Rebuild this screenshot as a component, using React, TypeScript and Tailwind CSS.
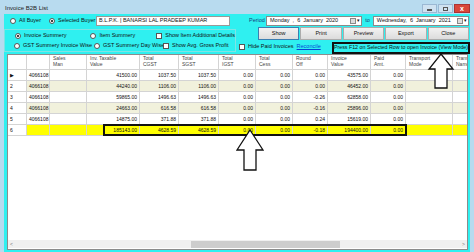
import React from "react";

type Row = {
  no: string;
  code: string;
  taxable: string;
  cgst: string;
  sgst: string;
  igst: string;
  cess: string;
  round: string;
  invoice: string;
  paid: string;
};

const rows: Row[] = [
  { no: "", code: "4066108", taxable: "41500.00", cgst: "1037.50", sgst: "1037.50", igst: "0.00", cess: "0.00", round: "0.00", invoice: "43575.00", paid: "0.00" },
  { no: "2", code: "4066108", taxable: "44240.00", cgst: "1106.00", sgst: "1106.00", igst: "0.00", cess: "0.00", round: "0.00", invoice: "46452.00", paid: "0.00" },
  { no: "3", code: "4066108", taxable: "59865.00", cgst: "1496.63", sgst: "1496.63", igst: "0.00", cess: "0.00", round: "-0.26", invoice: "62858.00", paid: "0.00" },
  { no: "4", code: "4066108", taxable: "24663.00", cgst: "616.58", sgst: "616.58", igst: "0.00", cess: "0.00", round: "-0.16", invoice: "25896.00", paid: "0.00" },
  { no: "5", code: "4066108", taxable: "14875.00", cgst: "371.88", sgst: "371.88", igst: "0.00", cess: "0.00", round: "0.24", invoice: "15619.00", paid: "0.00" },
];

const total: Row = { no: "6", code: "", taxable: "185143.00", cgst: "4628.59", sgst: "4628.59", igst: "0.00", cess: "0.00", round: "-0.18", invoice: "194400.00", paid: "0.00" };

const Radio = ({ checked, label }: { checked?: boolean; label: string }) => (
  <div className="flex items-center gap-[3px] whitespace-nowrap">
    <span className="w-[6px] h-[6px] shrink-0 rounded-full bg-white border border-[#555] flex items-center justify-center">
      {checked && <span className="w-[2px] h-[2px] rounded-full bg-black" />}
    </span>
    <span>{label}</span>
  </div>
);

const Check = ({ label }: { label: string }) => (
  <div className="flex items-center gap-[3px] whitespace-nowrap">
    <span className="w-[6px] h-[6px] shrink-0 bg-white border border-[#555]" />
    <span>{label}</span>
  </div>
);

const DateBox = ({ text }: { text: string }) => (
  <div className="h-[10px] bg-white border border-[#8a8a8a] flex items-center pl-[3px] pr-[1px] whitespace-pre flex-1 overflow-hidden">
    <span className="flex-1">{text}</span>
    <span className="flex items-center gap-[1px]">
      <span className="w-[6px] h-[6px] border border-[#888] bg-[#ddd]" />
      <span className="text-[5px] leading-none">▾</span>
    </span>
  </div>
);

const Btn = ({ label, focus }: { label: string; focus?: boolean }) => (
  <div
    className={`h-[13px] flex items-center justify-center bg-gradient-to-b from-[#f2f2f2] to-[#dcdcdc] border ${focus ? "border-[#3c7fb1]" : "border-[#acacac]"}`}
  >
    {label}
  </div>
);

const widths = [19, 23, 37, 53, 39, 40, 37, 37, 35, 43, 35, 47, 40];
const headers = ["", "", "Sales\nMan", "Inv. Taxable\nValue", "Total\nCGST", "Total\nSGST", "Total\nIGST", "Total\nCess", "Round\nOff", "Invoice\nValue", "Paid\nAmt.", "Transport\nMode", "Transp\nName"];

const DataRow = ({ r, idx, isTotal }: { r: Row; idx: number; isTotal?: boolean }) => {
  const cells = [r.code, "", r.taxable, r.cgst, r.sgst, r.igst, r.cess, r.round, r.invoice, r.paid, "", ""];
  const bg = isTotal ? "bg-[#ffff00]" : idx % 2 === 1 ? "bg-[#f1f1dc]" : "bg-white";
  return (
    <div className="flex h-[11px] text-[5px]">
      <div style={{ width: widths[0] }} className="shrink-0 border-r border-b border-[#d4d4d4] bg-white flex items-center pl-[2px]">
        {idx === 0 && !isTotal ? <span className="text-[5px] leading-none">▶</span> : r.no}
      </div>
      {cells.map((c, i) => (
        <div
          key={i}
          style={{ width: widths[i + 1] }}
          className={`shrink-0 border-r border-b border-[#d4d4d4] ${bg} flex items-center px-[2px] whitespace-nowrap ${i === 0 ? "justify-start" : "justify-end"}`}
        >
          {c}
        </div>
      ))}
    </div>
  );
};

export default function App() {
  return (
    <div className="w-[474px] h-[252px] bg-[#b8dbef] relative overflow-hidden text-[5.5px] leading-none text-[#111]" style={{ fontFamily: '"Liberation Sans", Arial, sans-serif' }}>
      {/* title bar */}
      <div className="h-[14px] flex items-center pl-[5px] pr-[4px]">
        <span className="text-[#222] text-[6px] pt-[2px]">Invoice B2B List</span>
        <div className="ml-auto flex items-center gap-[1px] mt-[3px]">
          <div className="w-[15px] h-[9px] bg-[#cfe2f1] border border-[#9bb8d3] flex items-center justify-center">
            <span className="w-[5px] h-[2px] bg-[#555] mt-[2px]" />
          </div>
          <div className="w-[15px] h-[9px] bg-[#cfe2f1] border border-[#9bb8d3] flex items-center justify-center">
            <span className="w-[5px] h-[4px] border border-[#555]" />
          </div>
          <div className="w-[16px] h-[9px] bg-[#d9463a] border border-[#a33] flex items-center justify-center text-white font-bold text-[7px]">
            x
          </div>
        </div>
      </div>

      {/* body */}
      <div className="mx-[4px] h-[238px] bg-[#2ff0f0] flex flex-col">
        <div className="flex h-[39px]">
          {/* left */}
          <div className="w-[232px] flex flex-col">
            <div className="h-[14px] flex items-center pl-[6px]">
              <div className="w-[39px]"><Radio label="All Buyer" /></div>
              <div className="w-[47px]"><Radio checked label="Selected Buyer" /></div>
              <div className="w-[134px] h-[10px] bg-white border border-[#999] flex items-center pl-[2px] whitespace-nowrap">
                B.L.P.K. | BANARSI LAL PRADEEP KUMAR
              </div>
            </div>
            <div className="mt-[1px] h-[23px] border border-[#7fe4e4] flex flex-col justify-center gap-[4px] pl-[10px]">
              <div className="flex items-center">
                <div className="w-[79px]"><Radio checked label="Invoice Summery" /></div>
                <div className="w-[69px]"><Radio label="Item Summery" /></div>
                <Check label="Show Item Additional Details" />
              </div>
              <div className="flex items-center -ml-[1px]">
                <div className="w-[80px]"><Radio label="GST Summery Invoice Wise" /></div>
                <div className="w-[69px]"><Radio label="GST Summery Day Wise" /></div>
                <Check label="Show Avg. Gross Profit" />
              </div>
            </div>
          </div>
          {/* right */}
          <div className="flex-1 flex flex-col">
            <div className="h-[13px] flex items-center pl-[13px] pr-[1px]">
              <span className="text-[#1a3d7a] w-[17px]">Period</span>
              <DateBox text="Monday  ,  6  January  2020" />
              <span className="mx-[3px] text-[#1a3d7a]">to</span>
              <DateBox text="Wednesday,  6  January  2021" />
            </div>
            <div className="h-[13px] grid grid-cols-5 gap-[1px] ml-[22px] mr-[1px]">
              <Btn label="Show" focus />
              <Btn label="Print" />
              <Btn label="Preview" />
              <Btn label="Export" />
              <Btn label="Close" />
            </div>
            <div className="flex items-center h-[13px] pl-[3px]">
              <Check label="Hide Paid Invoices" />
              <span className="ml-[3px] text-[#0645d6] underline">Reconcile</span>
              <div className="ml-auto h-[12px] w-[138px] border-2 border-[#111] flex items-center justify-center whitespace-nowrap mt-[2px] text-[5.3px]">
                Press F12 on Selected Row to open Invoice (View Mode)
              </div>
            </div>
          </div>
        </div>

        {/* grid */}
        <div className="relative ml-[3px] mr-[2px] mt-[1px] h-[196px] bg-white border border-[#8c8c8c] flex flex-col overflow-hidden">
          <div className="flex h-[15px] shrink-0">
            {headers.map((h, i) => (
              <div key={i} style={{ width: widths[i] }} className="shrink-0 border-r border-b border-[#d4d4d4] whitespace-pre pl-[3px] pt-[1px] text-[5px] leading-[5.5px] text-[#444] overflow-hidden">
                {h}
              </div>
            ))}
          </div>
          {rows.map((r, i) => (
            <DataRow key={i} r={r} idx={i} />
          ))}
          <DataRow r={total} idx={5} isTotal />
          <div className="flex-1" />
          <div className="h-[8px] mb-[1px] bg-[#f0f0f0] flex items-center text-[5px] text-[#777] px-[2px]">
            <span>&lt;</span>
            <div className="ml-[178px] w-[149px] h-[7px] bg-[#cdcdcd]" />
            <span className="ml-auto">&gt;</span>
          </div>
          {/* black box around total values */}
          <div className="absolute left-[95px] top-[69px] w-[304px] h-[12px] border-2 border-[#111]" />
        </div>
      </div>

      {/* arrows */}
      <svg className="absolute left-0 top-0" width="474" height="252" viewBox="0 0 474 252">
        <path d="M441 54 L453 69 L447 69 L447 88 L435 88 L435 69 L429 69 Z" fill="white" stroke="#111" strokeWidth="1.3" strokeLinejoin="miter" />
        <path d="M250 130 L263 150 L256 150 L256 170 L244 170 L244 150 L237 150 Z" fill="white" stroke="#111" strokeWidth="1.3" strokeLinejoin="miter" />
      </svg>
    </div>
  );
}
